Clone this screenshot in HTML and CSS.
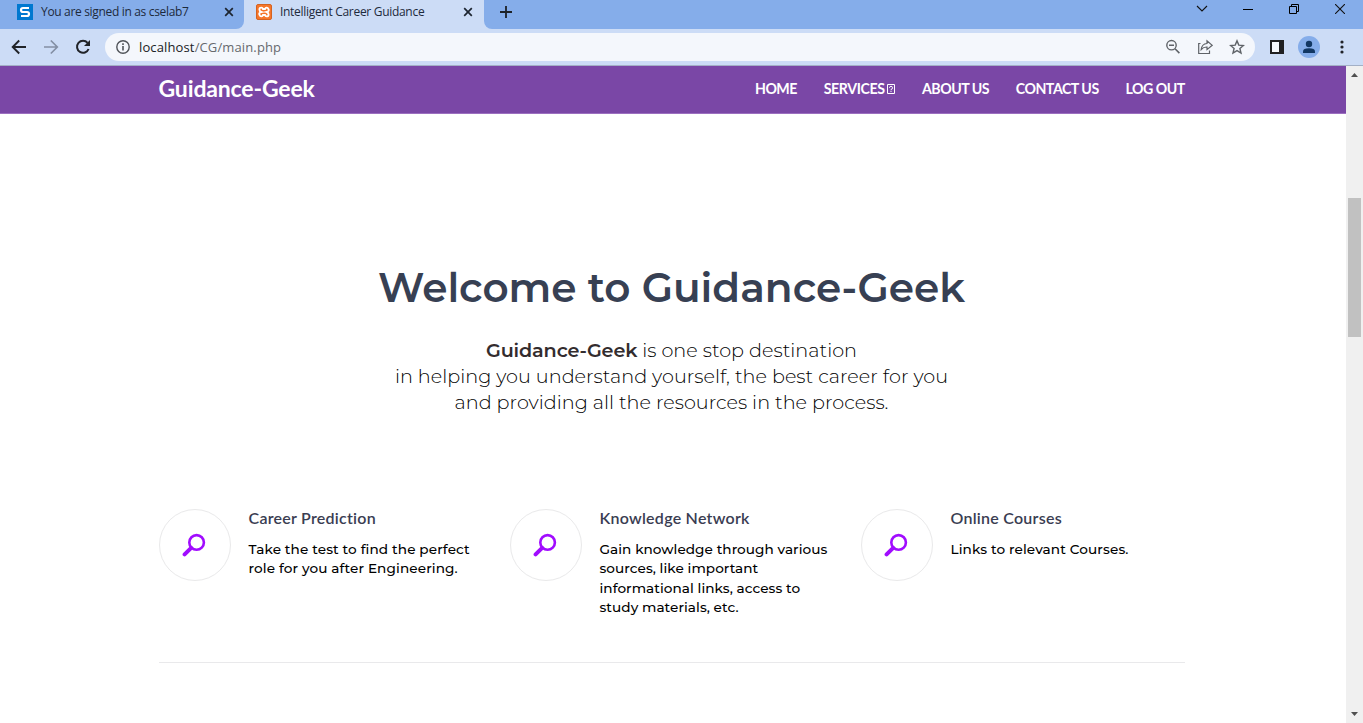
FILE: index.html
```html
<!DOCTYPE html>
<html lang="en">
<head>
<meta charset="utf-8">
<title>Intelligent Career Guidance</title>
<link rel="stylesheet" href="styles.css">
</head>
<body>
<div class="tabs">
  <div class="tab">
    <svg class="favicon" width="16" height="16"><rect width="16" height="16" fill="#0078d0"/><path d="M12 4H6Q4 4 4 6T6 8H10Q12 8 12 10T10 12H4" fill="none" stroke="#fff" stroke-width="2.2"/></svg>
    <span class="tab-title">You are signed in as cselab7</span>
    <svg class="close" width="10" height="10"><path d="M1.2 1.2l7.6 7.6M8.8 1.2L1.2 8.8" stroke="#1d2530" stroke-width="1.7"/></svg>
  </div>
  <div class="tab active">
    <svg class="favicon" width="16" height="16"><rect x=".5" y=".5" width="15" height="15" rx="1.5" fill="#f6762a" stroke="#d46321"/><path d="M5.4 8Q3.4 7.3 3.4 5.4T5.4 3.6Q6.6 3.7 7 5H9Q9.4 3.7 10.6 3.6T12.6 5.4 10.6 8Q12.6 8.7 12.6 10.6T10.6 12.4Q9.4 12.3 9 11H7Q6.6 12.3 5.4 12.4T3.4 10.6 5.4 8z" fill="none" stroke="#fff" stroke-width="1.9"/></svg>
    <span class="tab-title second">Intelligent Career Guidance</span>
    <svg class="close" width="10" height="10"><path d="M1.2 1.2l7.6 7.6M8.8 1.2L1.2 8.8" stroke="#1d2530" stroke-width="1.7"/></svg>
  </div>
  <div class="strip">
    <svg class="plus" width="12" height="12"><path d="M6 0v12M0 6h12" stroke="#1d2228" stroke-width="1.8"/></svg>
    <div class="win">
      <svg width="12" height="10"><path d="M1 2l5 5 5-5" fill="none" stroke="#111" stroke-width="1.1"/></svg>
      <svg width="10" height="10"><path d="M0 5.5h10" stroke="#000"/></svg>
      <svg width="10" height="10"><path d="M.5 2.5h7v7h-7zM2.5 2.5v-2h7v7h-2" fill="none" stroke="#000"/></svg>
      <svg width="10" height="10"><path d="M0 0l10 10M10 0L0 10" stroke="#111" stroke-width="1.1"/></svg>
    </div>
  </div>
</div>
<div class="toolbar">
  <svg class="nav-ic" width="16" height="16"><path d="M15 8H2M8.2 1.5L1.7 8l6.5 6.5" fill="none" stroke="#202328" stroke-width="1.9"/></svg>
  <svg class="nav-ic" width="16" height="16"><path d="M1 8h13M7.8 1.5L14.3 8l-6.5 6.5" fill="none" stroke="#848fa4" stroke-width="1.7"/></svg>
  <svg class="nav-ic" width="16" height="16"><path d="M13.6 10A6 6 0 1 1 12.6 3.9" fill="none" stroke="#202328" stroke-width="2"/><path d="M15 1v6H9z" fill="#202328"/></svg>
  <div class="omnibox">
    <svg width="14" height="14"><circle cx="7" cy="7" r="6.2" fill="none" stroke="#505459" stroke-width="1.4"/><path d="M7 6v4.5M7 3.3v1.6" stroke="#505459" stroke-width="1.6"/></svg>
    <span class="url"><b>localhost</b>/CG/main.php</span>
    <svg class="act zoomout" width="16" height="16"><circle cx="6.5" cy="6.2" r="4.7" fill="none" stroke="#5f6368" stroke-width="1.4"/><path d="M4 6.2h5M10 9.7l4.4 4.4" stroke="#5f6368" stroke-width="1.6"/></svg>
    <svg class="act" width="16" height="16"><path d="M3.5 4.5H1.7v10h10.8v-3" fill="none" stroke="#5f6368" stroke-width="1.2"/><path d="M4.2 10.5Q4.7 5 10 4.5V1.8L15.2 6.3 10 10.6V8Q6.5 7.8 4.2 10.5z" fill="none" stroke="#5f6368" stroke-width="1.2"/></svg>
    <svg class="act" width="16" height="16"><path d="M8 1.9l1.8 4.2 4.6.4-3.5 3 1.1 4.5L8 11.6 4 14l1.1-4.5-3.5-3 4.6-.4z" fill="none" stroke="#5f6368" stroke-width="1.4"/></svg>
  </div>
  <svg class="panel" width="14" height="14"><path d="M1 1h12v12H1z" fill="#f4f7fc" stroke="#1f2022" stroke-width="2"/><path d="M9 1h4v12H9z" fill="#1f2022"/></svg>
  <svg class="avatar" width="22" height="22"><circle cx="11" cy="11" r="11" fill="#85adea"/><circle cx="11" cy="8" r="3.2" fill="#113763"/><path d="M5 17v-1.5Q5 12.3 11 12.3T17 15.5V17z" fill="#113763"/></svg>
  <svg class="dots" width="4" height="14"><g fill="#202328"><circle cx="2" cy="2" r="1.6"/><circle cx="2" cy="7" r="1.6"/><circle cx="2" cy="12" r="1.6"/></g></svg>
</div>
<div class="viewport">
  <main class="page">
    <header class="site-head">
      <div class="brand">Guidance-Geek</div>
      <nav class="menu">
        <a>HOME</a>
        <a class="services">SERVICES<svg class="tofu" width="8" height="10"><path d="M.5.5h7v9h-7z" fill="none" stroke="#fff"/><path d="M2.5 3.8Q2.5 2.3 4 2.3T5.5 3.8 4 5.5v.8M4 7v1" fill="none" stroke="#fff"/></svg></a>
        <a>ABOUT US</a>
        <a>CONTACT US</a>
        <a>LOG OUT</a>
      </nav>
    </header>
    <section class="intro">
      <h1>Welcome to Guidance-Geek</h1>
      <p><strong>Guidance-Geek</strong> is one stop destination<br>in helping you understand yourself, the best career for you<br>and providing all the resources in the process.</p>
    </section>
    <section class="features">
      <article class="feature">
        <div class="ring"><svg width="24" height="24"><circle cx="14.6" cy="9.4" r="7.3" fill="none" stroke="#a10cff" stroke-width="2.6"/><path d="M9.2 14.8l-6.6 6.6" stroke="#a10cff" stroke-width="4" stroke-linecap="round"/></svg></div>
        <div><h2>Career Prediction</h2><p>Take the test to find the perfect<br>role for you after Engineering.</p></div>
      </article>
      <article class="feature">
        <div class="ring"><svg width="24" height="24"><circle cx="14.6" cy="9.4" r="7.3" fill="none" stroke="#a10cff" stroke-width="2.6"/><path d="M9.2 14.8l-6.6 6.6" stroke="#a10cff" stroke-width="4" stroke-linecap="round"/></svg></div>
        <div><h2>Knowledge Network</h2><p class="tight">Gain knowledge through various<br>sources, like important<br>informational links, access to<br>study materials, etc.</p></div>
      </article>
      <article class="feature">
        <div class="ring"><svg width="24" height="24"><circle cx="14.6" cy="9.4" r="7.3" fill="none" stroke="#a10cff" stroke-width="2.6"/><path d="M9.2 14.8l-6.6 6.6" stroke="#a10cff" stroke-width="4" stroke-linecap="round"/></svg></div>
        <div><h2>Online Courses</h2><p>Links to relevant Courses.</p></div>
      </article>
    </section>
  </main>
  <div class="scrollbar">
    <svg width="7" height="4"><path d="M0 4L3.5 0 7 4z" fill="#505050"/></svg>
    <div class="thumb"></div>
    <svg class="down" width="7" height="4"><path d="M0 0h7L3.5 4z" fill="#505050"/></svg>
  </div>
</div>
</body>
</html>
```
FILE: styles.css
```css
* { box-sizing: border-box; }
body { margin: 0; height: 723px; overflow: hidden; background: #fff; font-family: "Open Sans", "Noto Sans", sans-serif; }
svg { display: block; flex: none; }
h1, h2, p { margin: 0; }

.tabs { display: flex; height: 29px; background: #ccdcf6; }
.tab { display: flex; width: 244px; height: 29px; padding: 4px 0 0 17px; border-radius: 0 0 8px 0; background: #85adea; }
.tab.active { width: 240px; padding-left: 12px; background: #ccdcf6; }
.strip { display: flex; flex: 1; border-radius: 0 0 0 8px; background: #85adea; }
.tab-title { width: 183px; margin-left: 8px; font-size: 12px; line-height: 16px; letter-spacing: -.33px; color: #1d2a3c; white-space: nowrap; }
.second { letter-spacing: -.3px; }
.close { margin-top: 3px; }
.plus { margin: 6px 0 0 16px; }
.win { display: flex; margin-left: auto; margin-right: 18px; padding-top: 4px; }
.win svg + svg { margin-left: 36px; }
.win svg:nth-child(2) { margin-left: 35px; }

.toolbar { display: flex; align-items: center; height: 37px; padding-left: 11px; background: #ccdcf6; border-bottom: 1px solid #a3b0c6; }
.nav-ic { margin-right: 16px; }
.omnibox { display: flex; align-items: center; width: 1150px; height: 28px; margin-left: -2px; padding: 0 10px 0 11px; border-radius: 14px; background: #f4f7fc; }
.url { margin-left: 9px; font-size: 13px; line-height: 18px; letter-spacing: .13px; color: #66696e; }
.url b { font-weight: 400; color: #202124; }
.act { margin-left: 16px; }
.act.zoomout { margin-left: auto; }
.panel { margin-left: 15px; }
.avatar { margin-left: 14px; }
.dots { margin-left: 20px; }

.viewport { display: flex; height: 657px; }
.page { width: 1346px; }
.site-head { display: flex; justify-content: space-between; height: 48px; padding: 0 161.3px 0 158.5px; background: #7a47a6; border-bottom: 1px solid #9c6fc0; color: #fff; font-family: Lato, sans-serif; font-weight: 700; }
.brand { font-size: 23px; line-height: 45px; letter-spacing: -.15px; }
.menu { display: flex; gap: 26.8px; height: 46px; font-size: 14.2px; line-height: 46px; letter-spacing: -.5px; }
.menu a { display: flex; align-items: center; white-space: nowrap; }
.services { letter-spacing: -.4px; }
.tofu { margin-left: 2.5px; }

.intro { width: 1343px; padding-top: 143px; text-align: center; font-family: Montserrat, Inter, sans-serif; }
h1 { height: 62px; font-size: 40.6px; line-height: 62px; font-weight: 600; color: #374053; }
.intro p { margin-top: 18px; font-size: 19.2px; line-height: 26px; font-weight: 300; letter-spacing: .02px; color: #000; }
.intro strong { font-weight: 600; letter-spacing: -.12px; color: #332c2e; }

.features { display: grid; grid-template-columns: 351px 351px 324px; width: 1026px; height: 154px; margin: 94px 0 0 159px; border-bottom: 1px solid #e9e9eb; }
.feature { display: flex; }
.ring { display: flex; flex: none; align-items: center; justify-content: center; width: 72px; height: 72px; margin-right: 17.5px; padding-right: 1.5px; border: 1px solid #e9e9ea; border-radius: 50%; }
h2 { height: 19px; font: 600 16px/17px Lato, sans-serif; letter-spacing: .25px; color: #3a3d52; }
.feature p { margin-top: 12px; font: 500 13.6px/19.4px Montserrat, Inter, sans-serif; letter-spacing: .12px; color: #000; white-space: nowrap; }
.feature .tight { letter-spacing: .06px; }

.scrollbar { display: flex; flex-direction: column; align-items: center; width: 17px; height: 657px; padding: 7px 1px 7px 0; background: #f0f0f0; }
.thumb { width: 13px; height: 139px; margin-top: 121px; background: #c1c1c1; }
.down { margin-top: auto; }
```
